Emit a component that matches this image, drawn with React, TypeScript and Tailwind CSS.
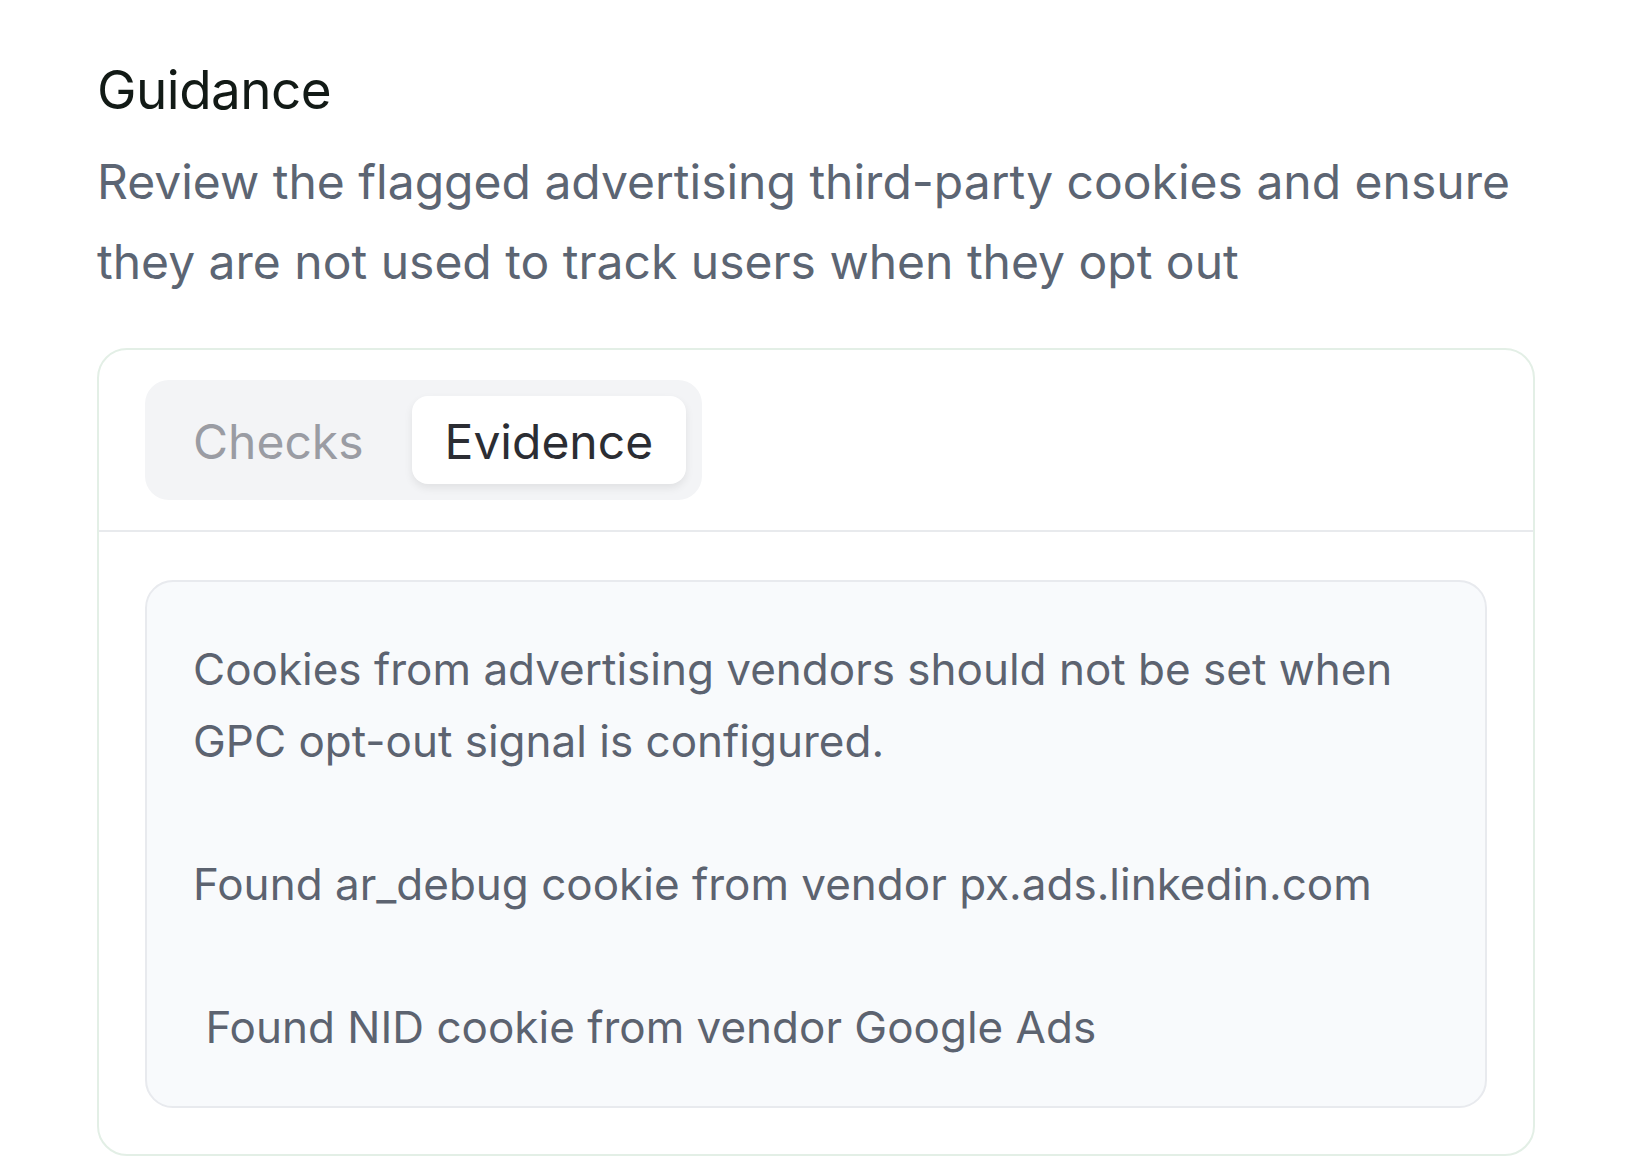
export default function App() {
  const evidence =
    "Cookies from advertising vendors should not be set when GPC opt-out signal is configured.\n\nFound ar_debug cookie from vendor px.ads.linkedin.com\n\n Found NID cookie from vendor Google Ads";

  return (
    <div
      className="min-h-screen bg-white px-[97px] pt-[52px]"
      style={{ fontFamily: "Inter, 'Noto Sans', sans-serif" }}
    >
      <h2 className="text-[53px] leading-[76px] font-normal tracking-[-0.01em] text-[#121a16]">
        Guidance
      </h2>
      <p className="mt-[14px] text-[48px] leading-[80px] text-[#5c6573]">
        Review the flagged advertising third-party cookies and ensure they are
        not used to track users when they opt out
      </p>

      <div className="mt-[46px] rounded-[30px] border-2 border-[#e3efe6] bg-white">
        <div className="px-[46px] pt-[30px] pb-[30px]">
          <div className="inline-flex h-[120px] items-center gap-[16px] rounded-[24px] bg-[#f3f4f6] p-[16px]">
            <button
              type="button"
              className="flex h-[88px] items-center rounded-[16px] px-[32px] pt-[4px] text-[48px] text-[#9a9ca3]"
            >
              Checks
            </button>
            <button
              type="button"
              className="flex h-[88px] items-center rounded-[16px] bg-white px-[33px] pt-[4px] text-[48px] text-[#2b2d33] shadow-[0_4px_8px_rgba(0,0,0,0.08)]"
            >
              Evidence
            </button>
          </div>
        </div>
        <div className="border-t-2 border-[#e8eaed] px-[46px] pt-[48px] pb-[46px]">
          <div className="rounded-[28px] border-2 border-[#e8eaee] bg-[#f8fafc] px-[46px] pt-[52px] pb-[43px]">
            <p className="whitespace-pre-wrap text-[44px] leading-[71.5px] text-[#5c6370]">
              {evidence}
            </p>
          </div>
        </div>
      </div>
    </div>
  );
}
